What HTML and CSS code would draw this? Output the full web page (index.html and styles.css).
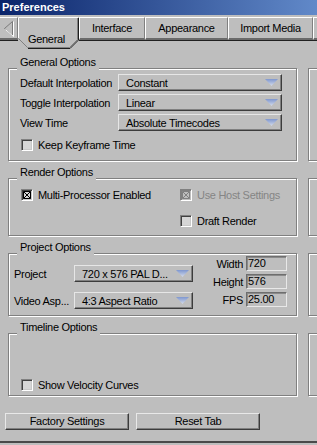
FILE: index.html
```html
<!DOCTYPE html>
<html lang="en">
<head>
  <meta charset="UTF-8">
  <meta name="viewport" content="width=device-width, initial-scale=1.0">
  <title>Preferences</title>
  <link rel="stylesheet" href="styles.css">
</head>
<body>
  <svg class="defs" width="0" height="0">
    <defs>
      <linearGradient id="arrowfill" x1="0" y1="0" x2="0" y2="1">
        <stop offset="0" stop-color="#7f97cf"/>
        <stop offset="1" stop-color="#d4dbea"/>
      </linearGradient>
    </defs>
  </svg>

  <div class="window">
    <div class="titlebar">Preferences</div>

    <div class="tabs">
      <div class="tab-arrow">
        <svg width="17" height="20" viewBox="0 0 17 20">
          <polygon points="4.5,10.5 12.5,3.5 12.5,17.5" fill="none" stroke="#7a7a7a"/>
          <path d="M13.5 3.5V18.5L5.5 11.5" fill="none" stroke="#fff"/>
        </svg>
      </div>
      <div class="tab active">
        <svg class="tab-shape" width="61" height="33" viewBox="0 0 61 33">
          <polygon points="0,0 61,0 61,23 52,32 10,32 0,22" fill="#bebebe"/>
          <path d="M0.5 21V0.5H60" stroke="#fff" fill="none"/>
          <path d="M0.5 21.5L9.5 30.5H51.5L59.5 22.5V1" stroke="#808080" fill="none"/>
          <path d="M10 31.5H52L60.5 23V1" stroke="#1e1e1e" fill="none"/>
        </svg>
        <span>General</span>
      </div>
      <div class="tab tab-interface">Interface</div>
      <div class="tab tab-appearance">Appearance</div>
      <div class="tab tab-import">Import Media</div>
      <div class="tab tab-more"></div>
    </div>

    <div class="panel">
      <div class="row">
        <div class="group">
          <div class="group-title">General Options</div>
          <div class="group-box general">
            <div class="field">
              <span class="label">Default Interpolation</span>
              <div class="select wide">Constant
                <svg width="13" height="7" viewBox="0 0 13 7"><polygon points="0,0 13,0 6.5,7" fill="url(#arrowfill)"/></svg>
              </div>
            </div>
            <div class="field">
              <span class="label">Toggle Interpolation</span>
              <div class="select wide">Linear
                <svg width="13" height="7" viewBox="0 0 13 7"><polygon points="0,0 13,0 6.5,7" fill="url(#arrowfill)"/></svg>
              </div>
            </div>
            <div class="field">
              <span class="label">View Time</span>
              <div class="select wide">Absolute Timecodes
                <svg width="13" height="7" viewBox="0 0 13 7"><polygon points="0,0 13,0 6.5,7" fill="url(#arrowfill)"/></svg>
              </div>
            </div>
            <div class="check"><span class="box"></span>Keep Keyframe Time</div>
          </div>
        </div>
        <div class="stub"></div>
      </div>

      <div class="row">
        <div class="group">
          <div class="group-title">Render Options</div>
          <div class="group-box render">
            <div class="check">
              <span class="box"><svg width="10" height="10" viewBox="0 0 10 10"><path d="M1.5 1.5h7v7h-7z M1.5 1.5l7 7 M8.5 1.5l-7 7" stroke="#000" fill="none"/></svg></span>
              Multi-Processor Enabled
            </div>
            <div class="check disabled">
              <span class="box"><svg width="10" height="10" viewBox="0 0 10 10"><path d="M1.5 1.5h7v7h-7z M1.5 1.5l7 7 M8.5 1.5l-7 7" stroke="#808080" fill="none"/></svg></span>
              Use Host Settings
            </div>
            <div></div>
            <div class="check"><span class="box"></span>Draft Render</div>
          </div>
        </div>
        <div class="stub"></div>
      </div>

      <div class="row">
        <div class="group">
          <div class="group-title">Project Options</div>
          <div class="group-box project">
            <div class="project-left">
              <div class="field">
                <span class="label short">Project</span>
                <div class="select narrow">720 x 576 PAL D...
                  <svg width="13" height="7" viewBox="0 0 13 7"><polygon points="0,0 13,0 6.5,7" fill="url(#arrowfill)"/></svg>
                </div>
              </div>
              <div class="field">
                <span class="label short">Video Asp...</span>
                <div class="select narrow">4:3 Aspect Ratio
                  <svg width="13" height="7" viewBox="0 0 13 7"><polygon points="0,0 13,0 6.5,7" fill="url(#arrowfill)"/></svg>
                </div>
              </div>
            </div>
            <div class="project-right">
              <div class="num-row">Width <span class="num">720</span></div>
              <div class="num-row">Height <span class="num">576</span></div>
              <div class="num-row">FPS <span class="num">25.00</span></div>
            </div>
          </div>
        </div>
        <div class="stub"></div>
      </div>

      <div class="row">
        <div class="group">
          <div class="group-title">Timeline Options</div>
          <div class="group-box timeline">
            <div class="check"><span class="box"></span>Show Velocity Curves</div>
          </div>
        </div>
        <div class="stub"></div>
      </div>

      <div class="buttons">
        <div class="button">Factory Settings</div>
        <div class="button">Reset Tab</div>
      </div>
      <div class="bottom-line"></div>
    </div>
  </div>
</body>
</html>
```

FILE: styles.css
```css
* {
  box-sizing: border-box;
}

body {
  margin: 0;
  background-color: #bebebe;
  font-family: "Liberation Sans", Arial, sans-serif;
  font-size: 11px;
  letter-spacing: -0.3px;
  color: #000;
}

.defs {
  display: block;
}

.window {
  width: 317px;
  height: 445px;
  overflow: hidden;
}

.titlebar {
  height: 15px;
  line-height: 15px;
  padding-left: 2px;
  margin-bottom: 2px;
  background: linear-gradient(to right, #0a246a, #6189c9);
  color: #fff;
  font-weight: bold;
  letter-spacing: 0;
}

/* tab strip */
.tabs {
  display: flex;
  height: 23px;
}

.tab-arrow {
  flex: none;
  width: 18px;
  height: 23px;
  border-top: 1px solid #fff;
  border-right: 1px solid #808080;
  border-bottom: 2px solid #6a6a6a;
  box-shadow: 0 1px #202020;
}

.tab-arrow svg {
  display: block;
}

.tab {
  flex: none;
  height: 23px;
  border-top: 1px solid #fff;
  border-left: 1px solid #fff;
  border-right: 1px solid #808080;
  border-bottom: 2px solid #6a6a6a;
  box-shadow: 0 1px #202020;
  text-align: center;
  line-height: 20px;
  white-space: nowrap;
}

.tab-interface {
  width: 66px;
}

.tab-appearance {
  width: 83px;
}

.tab-import {
  width: 85px;
}

.tab-more {
  width: 40px;
}

.tab.active {
  position: relative;
  width: 61px;
  height: 33px;
  border: none;
  box-shadow: none;
  padding: 12px 4px 0 0;
}

.tab-shape {
  position: absolute;
  left: 0;
  top: 0;
}

.tab.active span {
  position: relative;
}

/* groups */
.panel {
  padding: 17px 0 0 8px;
}

.row {
  display: flex;
  gap: 11px;
}

.row + .row {
  margin-top: 6px;
}

.group {
  flex: none;
  width: 289px;
}

.group-title {
  position: relative;
  width: fit-content;
  margin: 0 0 -2px 9px;
  padding: 0 3px 2px;
  line-height: 11px;
  background-color: #bebebe;
}

.group-box,
.stub {
  border: 1px solid #808080;
  box-shadow: inset 1px 1px #fff, 1px 1px #fff;
}

.stub {
  flex: none;
  width: 120px;
  margin-top: 11px;
}

.general {
  height: 93px;
  padding: 5px 0 0 11px;
  display: flex;
  flex-direction: column;
  gap: 3px;
}

.render {
  height: 58px;
  padding: 10px 0 0 12px;
  display: grid;
  grid-template-columns: 159px auto;
  row-gap: 14px;
  align-content: start;
}

.project {
  height: 63px;
  display: flex;
  padding: 2px 9px 0 5px;
}

.timeline {
  height: 63px;
  padding: 45px 0 0 12px;
}

/* controls */
.field {
  display: flex;
  align-items: center;
}

.field .label {
  width: 98px;
  white-space: nowrap;
}

.field .label.short {
  width: 60px;
}

.select {
  display: flex;
  align-items: center;
  height: 17px;
  padding: 0 3px 0 7px;
  border: 1px solid;
  border-color: #e6e6e6 #3c3c3c #3c3c3c #e6e6e6;
  box-shadow: inset -1px -1px #808080;
  white-space: nowrap;
  overflow: hidden;
}

.select.wide {
  width: 164px;
}

.select.narrow {
  width: 119px;
}

.select svg {
  flex: none;
  margin-left: auto;
}

.check {
  display: flex;
  align-items: center;
  gap: 5px;
  line-height: 12px;
  white-space: nowrap;
}

.general .check {
  margin: 5px 0 0 1px;
}

.box {
  flex: none;
  width: 12px;
  height: 12px;
  border: 1px solid;
  border-color: #808080 #fff #fff #808080;
  box-shadow: inset 1px 1px #404040, inset -1px -1px #c8c8c8;
  background-color: #d6d6d6;
}

.box svg {
  display: block;
}

.check.disabled {
  color: #858585;
}

.check.disabled .box {
  background-color: #bebebe;
  box-shadow: inset 1px 1px #808080;
}

.project-left {
  padding-top: 9px;
  display: flex;
  flex-direction: column;
  gap: 10px;
}

.project-right {
  margin-left: auto;
  display: flex;
  flex-direction: column;
  gap: 3px;
}

.num-row {
  display: flex;
  align-items: center;
  justify-content: flex-end;
  gap: 3px;
}

.num {
  width: 41px;
  height: 15px;
  padding-left: 1px;
  line-height: 13px;
  border: 1px solid;
  border-color: #6e6e6e #e8e8e8 #e8e8e8 #6e6e6e;
  box-shadow: inset 1px 1px #8a8a8a;
}

.buttons {
  display: flex;
  gap: 7px;
  margin: 17px 0 0 -3px;
}

.button {
  width: 124px;
  height: 17px;
  border: 1px solid;
  border-color: #e8e8e8 #3c3c3c #3c3c3c #e8e8e8;
  box-shadow: inset -1px -1px #808080;
  text-align: center;
  line-height: 15px;
}

.bottom-line {
  margin: 11px 0 0 -8px;
  height: 2px;
  background-color: #4a4a4a;
}
```
